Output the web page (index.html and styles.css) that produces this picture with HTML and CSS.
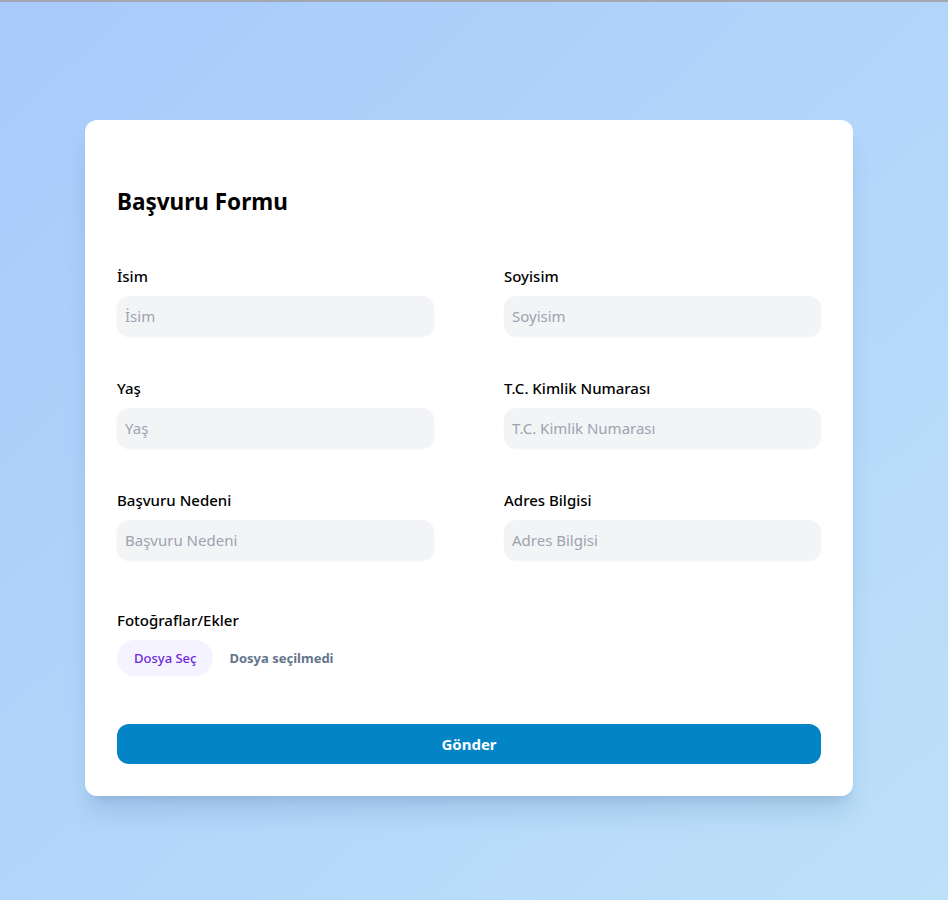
FILE: index.html
```html
<!DOCTYPE html>
<html lang="tr">
<head>
<meta charset="utf-8">
<title>Başvuru Formu</title>
<link rel="stylesheet" href="styles.css">
</head>
<body>
<div class="page">
  <form class="card">
    <h2 class="title">Başvuru Formu</h2>
    <div class="grid">
      <div class="field">
        <label class="label">İsim</label>
        <input class="input" type="text" placeholder="İsim">
      </div>
      <div class="field">
        <label class="label">Soyisim</label>
        <input class="input" type="text" placeholder="Soyisim">
      </div>
      <div class="field">
        <label class="label">Yaş</label>
        <input class="input" type="text" placeholder="Yaş">
      </div>
      <div class="field">
        <label class="label">T.C. Kimlik Numarası</label>
        <input class="input" type="text" placeholder="T.C. Kimlik Numarası">
      </div>
      <div class="field">
        <label class="label">Başvuru Nedeni</label>
        <input class="input" type="text" placeholder="Başvuru Nedeni">
      </div>
      <div class="field">
        <label class="label">Adres Bilgisi</label>
        <input class="input" type="text" placeholder="Adres Bilgisi">
      </div>
    </div>
    <div class="files">
      <label class="label">Fotoğraflar/Ekler</label>
      <div class="file-row">
        <span class="file-btn">Dosya Seç</span>
        <span class="file-name">Dosya seçilmedi</span>
      </div>
    </div>
    <button class="submit" type="button">Gönder</button>
  </form>
</div>
</body>
</html>
```
FILE: styles.css
```css
* { box-sizing: border-box; }
html, body { margin: 0; padding: 0; }
body {
  min-height: 900px;
  background: linear-gradient(to bottom right, #a7cafb, #bde1f9);
  border-top: 2px solid #a3a8b0;
  font-family: "Noto Sans", "Open Sans", sans-serif;
  color: #000;
}
.page {
  padding: 118px 0 0 85px;
}
.card {
  width: 768px;
  background: #fff;
  border-radius: 12px;
  padding: 32px;
  box-shadow: 0 20px 25px -5px rgba(30, 64, 120, 0.15), 0 8px 10px -6px rgba(30, 64, 120, 0.12);
}
.title {
  margin: 34px 0 46px;
  font-size: 22.5px;
  line-height: 32px;
  font-weight: 700;
}
.grid {
  display: grid;
  grid-template-columns: 317px 317px;
  column-gap: 70px;
  row-gap: 40px;
}
.field { display: flex; flex-direction: column; }
.label {
  display: block;
  font-size: 15px;
  line-height: 24px;
  font-weight: 500;
  margin-bottom: 8px;
}
.input {
  height: 40px;
  border: 0;
  border-radius: 12px;
  background: #f3f4f6;
  padding: 0 8px;
  font-family: inherit;
  font-size: 15px;
  color: #111;
  box-shadow: 0 1px 2px rgba(0, 0, 0, 0.05);
  outline: none;
}
.input::placeholder { color: #9ca3af; }
.files { margin-top: 48px; }
.file-row {
  display: flex;
  align-items: center;
  height: 36px;
}
.file-btn {
  display: flex;
  align-items: center;
  height: 36px;
  padding: 0 17px;
  border-radius: 9999px;
  background: #f5f3ff;
  color: #6d28d9;
  font-size: 13px;
  font-weight: 500;
  margin-right: 16px;
}
.file-name {
  color: #64748b;
  font-size: 13px;
  font-weight: 700;
}
.submit {
  display: block;
  width: 100%;
  height: 40px;
  margin-top: 48px;
  border: 0;
  border-radius: 12px;
  background: #0284c7;
  color: #fff;
  font-family: inherit;
  font-size: 15px;
  font-weight: 700;
}
```
